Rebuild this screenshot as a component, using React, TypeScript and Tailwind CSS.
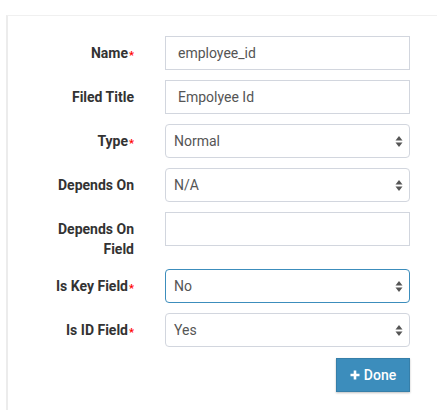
import React from "react";

const font = { fontFamily: "Roboto, 'Noto Sans', sans-serif" };

function Arrows() {
  return (
    <svg width="8" height="13" viewBox="0 0 8 13" className="shrink-0">
      <path d="M4 1 L7.5 5.5 L0.5 5.5 Z" fill="#555" />
      <path d="M4 12 L7.5 7.5 L0.5 7.5 Z" fill="#555" />
    </svg>
  );
}

function Label({ text, req }: { text: string; req?: boolean }) {
  return (
    <div className="w-[100px] ml-[26px] pt-[7px] text-right text-[14px] leading-[20px] font-bold text-[#333]">
      {text}
      {req && (
        <span className="text-[#ff0000] text-[11px] inline-block translate-y-[1px] ml-[1px]">*</span>
      )}
    </div>
  );
}

function TextBox({ value }: { value: string }) {
  return (
    <div className="ml-[31px] w-[245px] h-[34px] border border-[#d2d6de] px-[12px] flex items-center text-[14px] text-[#555]">
      {value}
    </div>
  );
}

function SelectBox({ value, focus }: { value: string; focus?: boolean }) {
  return (
    <div
      className={
        focus
          ? "ml-[31px] w-[245px] h-[34px] border border-[#3c8dbc] rounded-[4px] pl-[8px] pr-[6px] flex items-center justify-between text-[14px] text-[#555]"
          : "ml-[31px] w-[245px] h-[34px] border border-[#d2d6de] rounded-[4px] pl-[8px] pr-[6px] flex items-center justify-between text-[14px] text-[#555]"
      }
    >
      <span>{value}</span>
      <Arrows />
    </div>
  );
}

export default function App() {
  return (
    <div className="w-[437px] h-[410px] bg-white pt-[15px] pl-[6px] overflow-hidden" style={font}>
      <div className="h-[395px] border-t border-t-[#f0f0f0] border-l-2 border-l-[#ececec] bg-white pt-[20px]">
        <div className="flex mb-[10px]">
          <Label text="Name" req />
          <TextBox value="employee_id" />
        </div>
        <div className="flex mb-[10px]">
          <Label text="Filed Title" />
          <TextBox value="Empolyee Id" />
        </div>
        <div className="flex mb-[10px]">
          <Label text="Type" req />
          <SelectBox value="Normal" />
        </div>
        <div className="flex mb-[10px]">
          <Label text="Depends On" />
          <SelectBox value="N/A" />
        </div>
        <div className="flex mb-[10px]">
          <Label text="Depends On Field" />
          <TextBox value="" />
        </div>
        <div className="flex mb-[10px]">
          <Label text="Is Key Field" req />
          <SelectBox value="No" focus />
        </div>
        <div className="flex mb-[11px]">
          <Label text="Is ID Field" req />
          <SelectBox value="Yes" />
        </div>
        <div className="flex">
          <div className="w-[126px]" />
          <div className="ml-[31px] w-[245px] flex justify-end">
            <div className="w-[74px] h-[34px] bg-[#3c8dbc] border border-[#367fa9] shadow-[0_1px_2px_rgba(0,0,0,0.25)] flex items-center justify-center gap-[4px] text-white text-[14px] font-medium">
              <svg width="10" height="10" viewBox="0 0 10 10">
                <path d="M5 0.5 V9.5 M0.5 5 H9.5" stroke="#fff" strokeWidth="2.6" />
              </svg>
              <span>Done</span>
            </div>
          </div>
        </div>
      </div>
    </div>
  );
}
